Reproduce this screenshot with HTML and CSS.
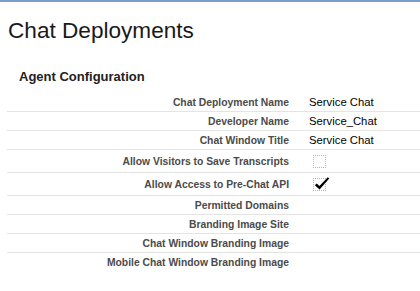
FILE: index.html
```html
<!DOCTYPE html>
<html>
<head>
<meta charset="utf-8">
<link rel="stylesheet" href="styles.css">
</head>
<body>
<div class="strip"></div>
<h1 class="title">Chat Deployments</h1>
<h2 class="section">Agent Configuration</h2>
<div class="table">
  <div class="row"><div class="label">Chat Deployment Name</div><div class="value">Service Chat</div></div>
  <div class="row"><div class="label">Developer Name</div><div class="value">Service_Chat</div></div>
  <div class="row"><div class="label">Chat Window Title</div><div class="value">Service Chat</div></div>
  <div class="row tall"><div class="label">Allow Visitors to Save Transcripts</div><div class="value"><span class="box"></span></div></div>
  <div class="row tall"><div class="label">Allow Access to Pre-Chat API</div><div class="value"><span class="box"><svg class="check" width="16" height="13" viewBox="0 -2 16 13"><path d="M0.8 6.2 L2.8 4.4 L5.4 7 L13.8 -1.8 L15.2 -0.6 L5.6 10.6 Z" fill="#000"/></svg></span></div></div>
  <div class="row"><div class="label">Permitted Domains</div><div class="value"></div></div>
  <div class="row"><div class="label">Branding Image Site</div><div class="value"></div></div>
  <div class="row"><div class="label">Chat Window Branding Image</div><div class="value"></div></div>
  <div class="row last"><div class="label">Mobile Chat Window Branding Image</div><div class="value"></div></div>
</div>
</body>
</html>
```
FILE: styles.css
```css
html, body {
  margin: 0;
  padding: 0;
  background: #fff;
  font-family: "Liberation Sans", Arial, sans-serif;
  overflow: hidden;
}
.strip {
  height: 2px;
  background: #7b9dcc;
}
.title {
  margin: 16px 0 0 8px;
  font-size: 22.6px;
  line-height: 25px;
  font-weight: normal;
  color: #1a1a1a;
}
.section {
  margin: 26px 0 0 19px;
  font-size: 13px;
  line-height: 15px;
  font-weight: bold;
  color: #222;
}
.table {
  margin: 9px 0 0 7px;
}
.row {
  display: grid;
  grid-template-columns: 282px 1fr;
  column-gap: 20px;
  align-items: center;
  height: 18px;
  border-bottom: 1px solid #e4e4e4;
}
.row.tall {
  height: 22px;
}
.row.last {
  border-bottom: none;
}
.label {
  text-align: right;
  font-size: 10.35px;
  font-weight: bold;
  color: #4b4b4b;
  white-space: nowrap;
}
.value {
  font-size: 11.3px;
  color: #000;
  white-space: nowrap;
  display: flex;
  align-items: center;
}
.box {
  position: relative;
  display: block;
  width: 11px;
  height: 11px;
  margin-left: 4px;
  border: 1px dotted #b8b8b8;
}
.check {
  position: absolute;
  left: 0;
  top: -2px;
  overflow: visible;
}
```
